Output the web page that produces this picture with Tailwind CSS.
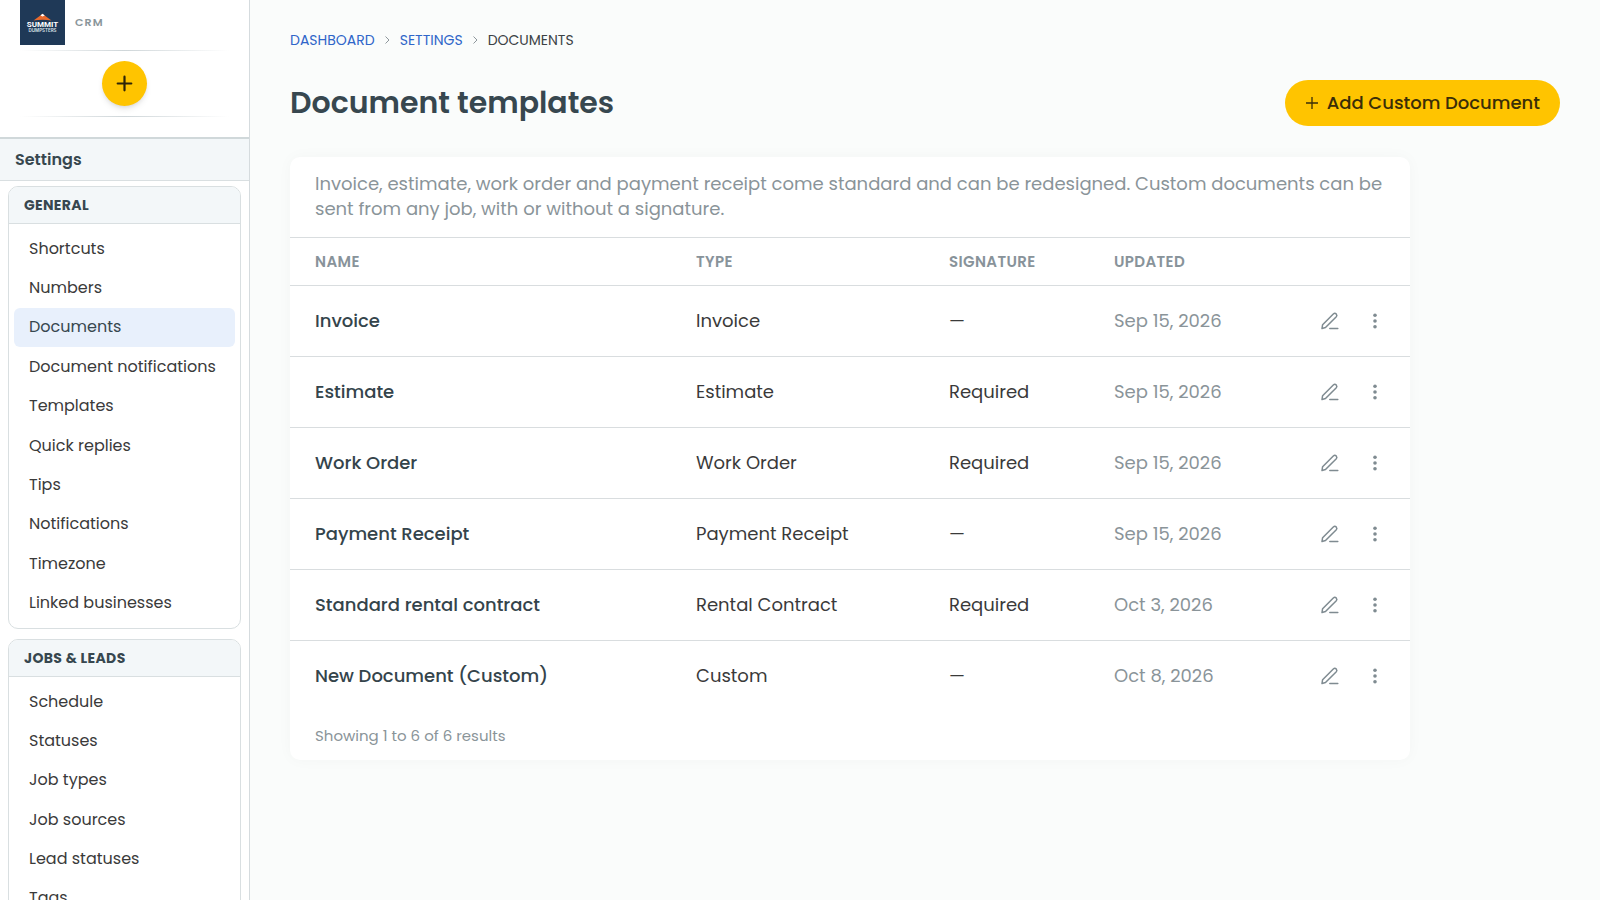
<!DOCTYPE html>
<html lang="en">
<head>
  <meta charset="UTF-8" />
  <meta name="viewport" content="width=device-width, initial-scale=1.0"/>
  <title>Document templates</title>
  <script src="https://cdn.jsdelivr.net/npm/@tailwindcss/browser@4"></script>
</head>
<body class="bg-[#fafcfb] font-['Poppins','Inter',sans-serif] text-[#3a3a3a]">
  <div class="flex h-screen overflow-hidden">
    <!-- Sidebar -->
    <aside class="flex w-[250px] shrink-0 flex-col overflow-hidden border-r border-[#d5dbde] bg-white">
      <div class="flex shrink-0 items-center gap-[10px] pl-5">
        <svg class="h-[45px] w-[45px] bg-[#1f3957]" viewBox="0 0 45 45" role="img" aria-label="Summit Dumpsters">
          <path d="M13.500 20.500L19 16.500L22.500 13.700L26 16.500L31.500 20.500Q22.500 18.800 13.500 20.500Z" fill="#e8692c"/>
          <path d="M20.500 15.500L22.500 13.700L24.700 15.500L22.500 16.500Z" fill="#fff"/>
          <text x="22.500" y="27.200" text-anchor="middle" font-family="Roboto, sans-serif" font-size="8" font-weight="700" fill="#fff">SUMMIT</text>
          <text x="22.500" y="31.500" text-anchor="middle" font-family="Inter, sans-serif" font-size="4.500" font-weight="600" fill="#dfe5eb">DUMPSTERS</text>
        </svg>
        <span class="text-[11px] font-semibold tracking-widest text-[#8a969b]">CRM</span>
      </div>
      <div class="mx-5 mt-[5px] h-px shrink-0 bg-linear-to-r from-transparent via-[#cfd6d9] to-transparent"></div>
      <div class="flex shrink-0 justify-center py-[10px]">
        <button aria-label="Create" class="flex h-[45px] w-[45px] items-center justify-center rounded-full bg-[#ffc400] text-[#2e2508] shadow-md">
          <svg class="h-[19px] w-[19px]" viewBox="0 0 19 19" fill="none" stroke="currentColor" stroke-width="2.200" stroke-linecap="round"><path d="M9.500 2.700v13.600M2.700 9.500h13.600"/></svg>
        </button>
      </div>
      <div class="mx-5 h-px shrink-0 bg-linear-to-r from-transparent via-[#cfd6d9] to-transparent"></div>
      <h2 class="mt-5 h-[44px] shrink-0 border-t-2 border-b border-t-[#d0d8da] border-b-[#d9dfe1] bg-[#f3f7f9] px-[15px] text-base leading-[41px] font-semibold text-[#37474f]">Settings</h2>

      <nav class="flex flex-col gap-[10px] px-2 pt-[5px]">
        <section class="overflow-hidden rounded-[10px] border border-[#d9dfe1]">
          <h3 class="border-b border-[#d9dfe1] bg-[#f3f7f9] px-[15px] text-sm leading-9 font-bold tracking-wide text-[#37474f]">GENERAL</h3>
          <div class="p-[5px]">
            <ul id="generalLinks" class="grid h-[394px] auto-rows-fr text-base"></ul>
          </div>
        </section>
        <section class="overflow-hidden rounded-[10px] border border-[#d9dfe1]">
          <h3 class="border-b border-[#d9dfe1] bg-[#f3f7f9] px-[15px] text-sm leading-9 font-bold tracking-wide text-[#37474f]">JOBS &amp; LEADS</h3>
          <div class="p-[5px]">
            <ul id="jobLinks" class="grid h-[236px] auto-rows-fr text-base"></ul>
          </div>
        </section>
      </nav>
    </aside>

    <!-- Main Content -->
    <main class="min-w-0 flex-1 px-10 pt-[30px]">
      <nav class="flex items-center gap-[9px] text-sm leading-5">
        <a href="#" class="text-[#2f66c9]">DASHBOARD</a>
        <svg class="h-2 w-[7px] text-[#8d969b]" viewBox="0 0 7 8" fill="none" stroke="currentColor"><path d="M1.500 0.500L5 4L1.500 7.500"/></svg>
        <a href="#" class="text-[#2f66c9]">SETTINGS</a>
        <svg class="h-2 w-[7px] text-[#8d969b]" viewBox="0 0 7 8" fill="none" stroke="currentColor"><path d="M1.500 0.500L5 4L1.500 7.500"/></svg>
        <span class="text-[#3c4245]">DOCUMENTS</span>
      </nav>

      <div class="mt-[30px] flex items-center justify-between">
        <h1 class="text-3xl leading-10 font-semibold text-[#37474f]">Document templates</h1>
        <button class="flex h-[46px] items-center gap-2 rounded-full bg-[#ffc400] px-5 text-lg font-medium text-[#3a2e08]">
          <svg class="h-[14px] w-[14px]" viewBox="0 0 14 14" fill="none" stroke="currentColor" stroke-width="1.300"><path d="M7 1v12M1 7h12"/></svg>
          Add Custom Document
        </button>
      </div>

      <div class="mt-[31px] max-w-[1120px] rounded-[10px] bg-white shadow-[0_0_15px_rgba(0,0,0,0.03)]">
        <p class="px-[25px] pt-[14px] pb-4 text-lg leading-[25px] text-[#8a9499]">Invoice, estimate, work order and payment receipt come standard and can be redesigned. Custom documents can be sent from any job, with or without a signature.</p>
        <table class="w-full table-fixed text-left text-lg">
          <thead>
            <tr class="h-[48px] border-y border-[#d9dddf] text-[15px] tracking-wide text-[#88939a]">
              <th class="w-[381px] pl-[25px] font-semibold">NAME</th>
              <th class="w-[253px] pl-[25px] font-semibold">TYPE</th>
              <th class="w-[165px] pl-[25px] font-semibold">SIGNATURE</th>
              <th class="pl-[25px] font-semibold">UPDATED</th>
              <th class="w-[120px]"></th>
            </tr>
          </thead>
          <tbody id="documentRows"></tbody>
        </table>
        <p class="px-[25px] py-3 text-[15px] leading-6 text-[#8a9499]">Showing 1 to 6 of 6 results</p>
      </div>
    </main>
  </div>

  <script>
    const generalLinks = ['Shortcuts', 'Numbers', 'Documents', 'Document notifications', 'Templates', 'Quick replies', 'Tips', 'Notifications', 'Timezone', 'Linked businesses'];
    const jobLinks = ['Schedule', 'Statuses', 'Job types', 'Job sources', 'Lead statuses', 'Tags'];
    const documents = [
      { name: 'Invoice', type: 'Invoice', signature: '—', updated: 'Sep 15, 2026' },
      { name: 'Estimate', type: 'Estimate', signature: 'Required', updated: 'Sep 15, 2026' },
      { name: 'Work Order', type: 'Work Order', signature: 'Required', updated: 'Sep 15, 2026' },
      { name: 'Payment Receipt', type: 'Payment Receipt', signature: '—', updated: 'Sep 15, 2026' },
      { name: 'Standard rental contract', type: 'Rental Contract', signature: 'Required', updated: 'Oct 3, 2026' },
      { name: 'New Document (Custom)', type: 'Custom', signature: '—', updated: 'Oct 8, 2026' }
    ];

    function renderLinks(id, links) {
      document.getElementById(id).innerHTML = links.map(link => `
        <li class="flex">
          <a href="#" class="flex flex-1 items-center rounded-md px-[15px] whitespace-nowrap ${link === 'Documents' ? 'bg-[#e8f0fc] text-[#37474f]' : ''}">${link}</a>
        </li>
      `).join('');
    }

    renderLinks('generalLinks', generalLinks);
    renderLinks('jobLinks', jobLinks);

    document.getElementById('documentRows').innerHTML = documents.map(doc => `
      <tr class="h-[71px] border-b border-[#d9dddf] last:border-b-0">
        <td class="pl-[25px] font-medium text-[#34444b]">${doc.name}</td>
        <td class="pl-[25px]">${doc.type}</td>
        <td class="pl-[25px]">${doc.signature}</td>
        <td class="pl-[25px] text-[#8a9499]">${doc.updated}</td>
        <td class="pr-[25px]">
          <div class="flex items-center justify-end gap-[25px] text-[#7f8b91]">
            <button aria-label="Edit ${doc.name}">
              <svg class="h-5 w-5" viewBox="0 0 20 20" fill="none" stroke="currentColor" stroke-width="1.500" stroke-linecap="round" stroke-linejoin="round"><path d="M2 17.500L2.600 13.700L13.300 3Q14.800 1.700 16.200 2.900Q17.500 4.300 16.300 5.700L5.500 16.500ZM9.800 17.500H17.800"/></svg>
            </button>
            <button aria-label="More actions for ${doc.name}">
              <svg class="h-5 w-5" viewBox="0 0 20 20" fill="currentColor"><circle cx="10" cy="4.200" r="1.800"/><circle cx="10" cy="10" r="1.800"/><circle cx="10" cy="15.800" r="1.800"/></svg>
            </button>
          </div>
        </td>
      </tr>
    `).join('');
  </script>
</body>
</html>
